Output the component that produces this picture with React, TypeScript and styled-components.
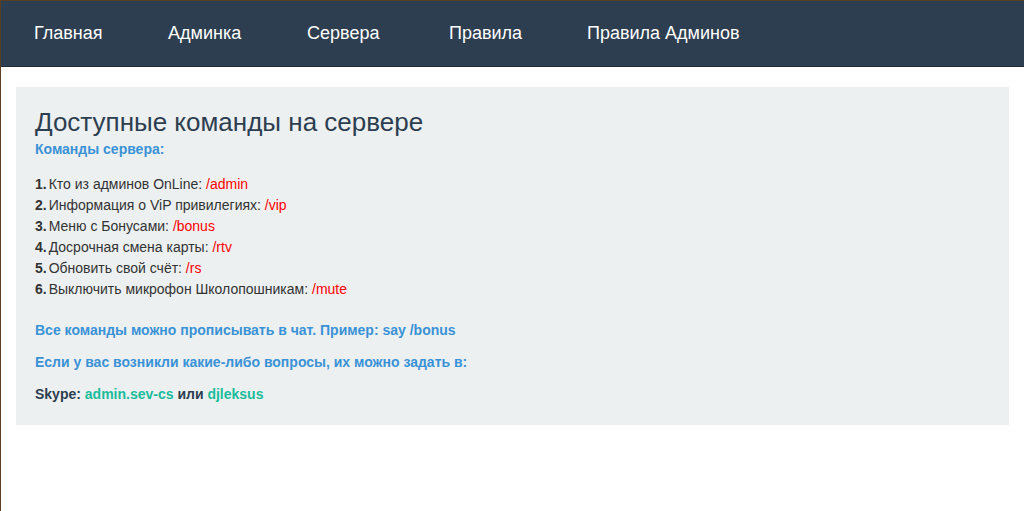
import React from "react";
import styled, { createGlobalStyle } from "styled-components";

const Global = createGlobalStyle`
  html, body { margin: 0; padding: 0; background: #fff; }
  body { font-family: "Liberation Sans", Arial, sans-serif; }
`;

const Page = styled.div`
  min-height: 511px;
  box-sizing: border-box;
  border-left: 1px solid #5a3d22;
  border-top: 1px solid #5a3d22;
`;

const Nav = styled.nav`
  height: 65px;
  background: #2d3e50;
  display: flex;
  align-items: center;
  padding-left: 33px;
  border-bottom: 1px solid #1f2b38;
`;

const NavItem = styled.a<{ $w: number }>`
  width: ${(p) => p.$w}px;
  color: #fff;
  font-size: 18px;
  text-decoration: none;
`;

const Panel = styled.section`
  margin: 20px 15px 0 15px;
  background: #ecf0f1;
  padding: 18px 19px 20px;
  height: 300px;
`;

const Title = styled.h1`
  margin: 0;
  font-weight: normal;
  font-size: 26px;
  line-height: 34px;
  color: #2c3e50;
`;

const Blue = styled.p`
  margin: 0;
  color: #3a92d6;
  font-weight: bold;
  font-size: 14px;
  line-height: 20px;
`;

const List = styled.div`
  margin: 15px 0 20px;
  display: flex;
  flex-direction: column;
`;

const Row = styled.div`
  font-size: 14px;
  line-height: 21px;
  color: #333;
`;

const Num = styled.b`
  margin-right: 2px;
`;

const Cmd = styled.span`
  color: #ff0000;
`;

const Note = styled(Blue)`
  margin-bottom: 12px;
`;

const Contact = styled.p`
  margin: 0;
  font-size: 14px;
  font-weight: bold;
  line-height: 20px;
  color: #2c3e50;
`;

const Green = styled.span`
  color: #1abc9c;
`;

const items: [string, string][] = [
  ["Кто из админов OnLine:", "/admin"],
  ["Информация о ViP привилегиях:", "/vip"],
  ["Меню с Бонусами:", "/bonus"],
  ["Досрочная смена карты:", "/rtv"],
  ["Обновить свой счёт:", "/rs"],
  ["Выключить микрофон Школопошникам:", "/mute"],
];

export default function App() {
  return (
    <Page>
      <Global />
      <Nav>
        <NavItem $w={134}>Главная</NavItem>
        <NavItem $w={139}>Админка</NavItem>
        <NavItem $w={142}>Сервера</NavItem>
        <NavItem $w={138}>Правила</NavItem>
        <NavItem $w={200}>Правила Админов</NavItem>
      </Nav>
      <Panel>
        <Title>Доступные команды на сервере</Title>
        <Blue>Команды сервера:</Blue>
        <List>
          {items.map(([t, c], i) => (
            <Row key={i}>
              <Num>{i + 1}.</Num>
              {t} <Cmd>{c}</Cmd>
            </Row>
          ))}
        </List>
        <Note>Все команды можно прописывать в чат. Пример: say /bonus</Note>
        <Note>Если у вас возникли какие-либо вопросы, их можно задать в:</Note>
        <Contact>
          Skype: <Green>admin.sev-cs</Green> или <Green>djleksus</Green>
        </Contact>
      </Panel>
    </Page>
  );
}
